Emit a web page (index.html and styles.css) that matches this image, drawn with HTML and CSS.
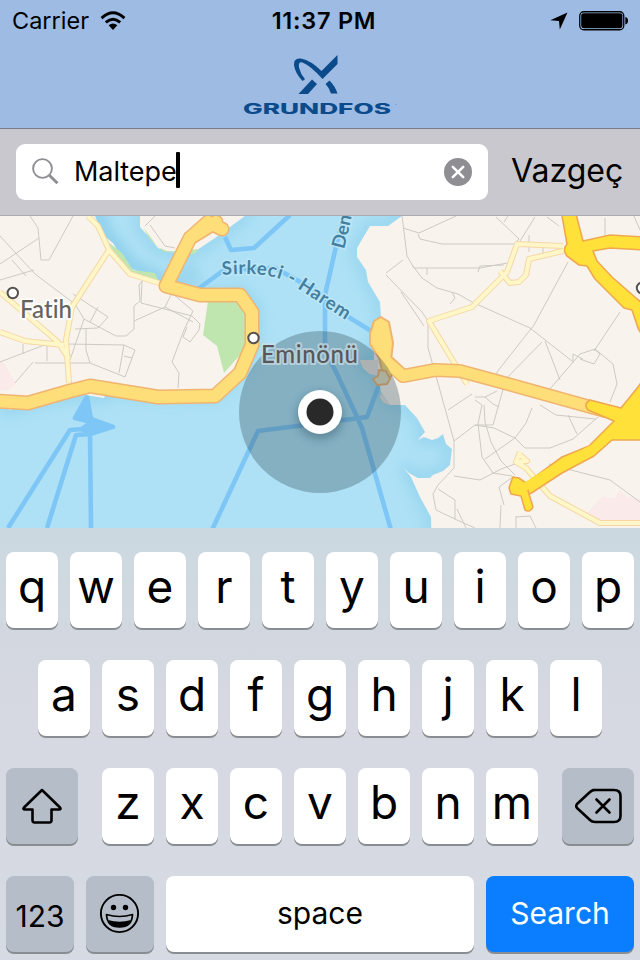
FILE: index.html
```
<!DOCTYPE html>
<html lang="tr">
<head>
<meta charset="utf-8">
<title>Grundfos</title>
<link rel="stylesheet" href="styles.css">
</head>
<body>
<div class="screen">
  <header class="header">
    <div class="status">
      <div class="status-left"><span class="carrier">Carrier</span>
        <svg class="wifi" width="26" height="20" viewBox="0 0 26 20"><g fill="none" stroke="#000" stroke-width="2.9"><path d="M1.6 7.1Q13-3.4 24.4 7.1"/><path d="M5.8 11.4Q13 4.9 20.2 11.4"/></g><path d="M8.6 14.3Q13 10.8 17.4 14.3L13 19Z"/></svg>
      </div>
      <div class="time">11:37 PM</div>
      <div class="status-right">
        <svg width="18" height="18" viewBox="0 0 18 18"><path d="M17.5.5 9.8 17.5 9 9 .3 8.2Z"/></svg>
        <svg width="50" height="20" viewBox="0 0 50 20"><rect x=".75" y=".75" width="44" height="18" rx="4" fill="none" stroke="#000" stroke-width="1.3"/><rect x="2.2" y="2.2" width="41.2" height="15" rx="2.4"/><path d="M46.3 6q2.7.7 2.7 3.7t-2.7 3.7z"/></svg>
      </div>
    </div>
    <svg class="logo" width="160" height="66" viewBox="240 52 160 66">
      <g fill="#0b4a8b"><path d="M337.5 55v9L322.500 79Q311 66 302.500 62.500Q298 61.500 299 67.500Q300.500 74 305 79.200L302.500 81Q295 73 294 65Q293.500 57.500 301 58.500Q311 60.500 321.500 71Z"/><path d="M312 79.500 317 84 308 94H298.500Z"/><path d="M325.500 84 329.500 80.500Q335 86 337.500 93.500H331Q329.500 88 325.500 84Z"/></g>
      <text class="logo-text" x="243" y="113.500" textLength="148" lengthAdjust="spacingAndGlyphs">GRUNDFOS</text>
      <circle cx="396" cy="104.500" r=".6" fill="#5f8fc4"/>
    </svg>
  </header>
  <section class="searchbar">
    <div class="field">
      <svg width="28" height="28" viewBox="0 0 28 28" fill="none" stroke="#8e8e93"><circle cx="10.500" cy="10.500" r="9.400" stroke-width="1.900"/><path d="m17.300 17.300 8.200 8" stroke-width="3"/></svg>
      <span class="query">Maltepe</span><span class="caret"></span>
      <svg class="clear" width="28" height="28" viewBox="0 0 28 28"><circle cx="14" cy="14" r="14" fill="#8e8e93"/><path d="m8.800 8.800 10.400 10.400m0-10.400L8.800 19.200" stroke="#fff" stroke-width="2.600" stroke-linecap="round"/></svg>
    </div>
    <span class="cancel">Vazgeç</span>
  </section>
  <svg class="map" width="640" height="312" viewBox="0 216 640 312">
    <defs>
      <filter id="soft" x="-10%" y="-10%" width="120%" height="120%"><feGaussianBlur stdDeviation="7"/></filter>
      <filter id="shade" x="-50%" y="-50%" width="200%" height="200%"><feGaussianBlur stdDeviation="5"/></filter>
      <path id="fatih" d="M-30 190H90L95 216 103 235 113 243 122 258 130 268 145 274 157 282 165 290 200 297 240 292 254 305 255 325 253 345 238 372 216 395 150 394 108 389 104 398 80 394 62 396 30 403 10 410 0 400H-30Z"/>
      <path id="galata" d="M140 190V227L149 237 158 248 166 251 180 252 197 250 215 238 245 216 250 190Z"/>
      <path id="asia" d="M402 190V216L388 226H370L357 248V257L366 270 368 282 380 302 381 318 374 345V360H360L363 368 370 374 378 375 381 392 390 405H405L417 418 425 432 418 440 424 437 432 440 438 438 443 434 446 444 452 449 450 465 443 471 433 475 430 478H418L409 473 403 467 411 477 420 497 431 517 432 560H670V190Z"/>
      <path id="sirkeci" d="M222 275Q274 270 296 287.500L352 324"/>
      <path id="der" d="M344 249.500 347 238 357 190"/>
    </defs>
    <rect y="216" width="640" height="312" fill="#aee1f5"/>
    <g filter="url(#soft)" fill="none" stroke="#7cc8e8" stroke-width="11" opacity=".5"><use href="#fatih"/><use href="#galata"/><use href="#asia"/></g>
    <path d="M95 206 103 235 130 268 165 286 198 270" fill="none" stroke="#80c8e6" stroke-width="22" opacity=".35" filter="url(#shade)"/>
    <g fill="none" stroke="#7dc6f6" stroke-width="4.600" stroke-linejoin="round">
      <path d="M225 237 231 250 254 248 290 215M198 289 224 270 275 268 315 290 350 318 376 334M346 210 337 242 325 295V350L338 376 357 417 362 428 391 530M212 530 258 431 367 417 379 385"/>
      <path d="M8 528 70 430 112 427 90 434 76 435 47 528M90 434 91 528M87 397 75 418 113 427 91 419Z"/>
    </g>
    <path d="M87 397 75 418 92 423 113 427 90 434 76 430 91 420Z" fill="#7dc6f6"/>
    <g fill="#f8f4ed"><use href="#fatih"/><use href="#galata"/><use href="#asia"/></g>
    <path d="M208 301 247 296 248 340 240 355 224 373 217 346 203 335ZM107 241 122 253 133 270 155 273 158 280 138 276 125 269ZM143 227 158 247 169 252 199 249 194 254 164 252 149 238Z" fill="#c0e6b0"/>
    <path d="M0 361 4 363 16 384 8 390 0 391ZM584 516 603 496 615 499 619 490 628 497 640 499V524L602 521Z" fill="#faeaea"/>
    <path d="M360 360H378V376L370 374 363 367ZM381 393 390 405 384 403 380 398Z" fill="#ebe3dd"/>
    <g fill="none" stroke="#cdcac5" stroke-width="1">
      <path d="M30 216 38 228 41 260H49L73 216M0 236 35 274 75 304 84 319 116 336H126L134 329V306L140 301 139 285 142 281M0 264 39 238M0 280 34 270M12 260 26 276M73 294 108 317 98 328 75 329M98 307 90 322M84 319 70 360M68 344 124 345 135 350 125 377 90 363 86 350V329M23 344V354M0 362 47 344V361M35 363H90M15 383 33 362M124 345 119 373M124 356 132 358M142 281 141 303 192 316 200 324 199 330 190 342 183 337 187 327M134 321 165 307 172 293M165 307 193 322M172 293 193 311 184 330 172 362 179 373 178 388M150 225 165 246 175 248M155 216 145 226"/>
      <path d="M402 216 407 256 414 268H480L507 263M403 228 419 233 456 216M418 234 420 239 442 244H515M496 217 519 239 516 242M535 217 520 241M504 222 508 216M547 217 559 226M413 266 422 278 437 288 458 294 472 302 530 328 572 361M401 292 424 326M386 273 403 260M386 275 422 312 428 321V348L436 376 454 441M568 262 534 325 497 372V378M542 342 497 388M545 341 560 380M549 390 580 354 595 349 613 364 617 384 610 402M573 363V354L583 359M594 349 600 354 594 364 580 359M594 351 620 312M605 218V240M634 216 640 230M529 235V252M543 247V254M478 272 480 266 504 265M427 268V275M448 410 472 394M454 441 475 425 494 428 515 438 525 448H550L573 439 598 417M504 386 493 425 475 425M497 391 485 397 475 397M475 400 482 405 478 424 482 457 493 473 512 476M484 405 485 422 491 442 501 461 515 475M532 408 526 423 515 438 485 459M540 405 556 415 595 419M568 415 577 434M454 441V468L438 485 433 494 436 510 457 520 475 528M454 476 480 480 501 469 515 464M549 464 571 470 610 480 640 502M438 489 455 500V519M457 509 466 528M514 476 499 487 504 505M501 505 500 528M516 516V528M516 517 530 516 536 528M452 292 455 298 450 304M485 397 493 404 499 407"/>
    </g>
    <g fill="none" stroke="#f5d7a6" stroke-width="6" stroke-linejoin="round"><path d="M88 216 98 226 109 250 130 274 159 283M109 250 72 307 66 340 69 383M0 292 58 342 69 359M0 332 25 341 64 345M563 246 517 244 507 272 472 307 429 321 467 384M563 251 529 259 526 275 519 282 510 283 500 271M520 452 516 462 526 468 550 496 600 523H640M520 455 527 461 516 462"/></g>
    <path fill="none" stroke="#fff7c8" stroke-width="4" stroke-linejoin="round" d="M88 216 98 226 109 250 130 274 159 283M109 250 72 307 66 340 69 383M0 292 58 342 69 359M0 332 25 341 64 345M563 246 517 244 507 272 472 307 429 321 467 384M563 251 529 259 526 275 519 282 510 283 500 271M520 452 516 462 526 468 550 496 600 523H640M520 455 527 461 516 462"/>
    <g fill="none" stroke-linejoin="round" stroke-linecap="round">
      <path d="M-5 401 28 403 70 391 90 386 158 397 215 396 240 373 252 345 252 312 240 295 200 295 166 286 190 238 216 222M190 238 208 222 222 229" stroke="#f0b470" stroke-width="15"/>
      <path d="M389 363 403 376 435 370 460 371 508 384 605 411" stroke="#f0b470" stroke-width="14"/>
      <path d="M-5 401 28 403 70 391 90 386 158 397 215 396 240 373 252 345 252 312 240 295 200 295 166 286 190 238 216 222M190 238 208 222 222 229" stroke="#fede78" stroke-width="12"/>
      <path d="M370 334 374 321 381 317 389 322 393 343 391 361 396 368 390 378 383 374 379 358 370 344Z" fill="#fede78" stroke="#f0b470" stroke-width="2"/>
      <path d="M387 362 403 376 435 370 460 371 508 384 605 411" stroke="#fede78" stroke-width="11"/>
      <path d="M379 370 386 371 390 379 387 384 377 385 373 379 378 376Z" fill="#e6dfc0" stroke="#f0b470" stroke-width="2"/>
    </g>
    <g stroke="#f0a850" fill="#ffe13a" stroke-width="1.600" stroke-linejoin="round">
      <path d="M561 210 567 244Q562 250 567 256L579 265 587 266 595 279 624 308 632 310 638 328 650 350V310L636 298 612 277 597 261 593 251 610 248 645 250V237L610 235 583 241 575 210Z"/>
      <path d="M650 370 638 387 621 408 590 400Q583 404 588 410L614 421 589 446 562 457 528 482 524 490 526 496 533 492 562 473 594 456 612 440H650Z"/>
      <path d="M511 482 513 477 519 478 526 483 529 494 533 507Q530 513 525 510L521 496 511 494 509 488Z"/>
    </g>
    <path d="M523 488 562 464 592 449" fill="none" stroke="#ffe13a" stroke-width="8" stroke-linecap="round"/>
    <text class="route"><textPath href="#sirkeci" textLength="136">Sirkeci - Harem</textPath></text>
    <text class="route"><textPath href="#der">Den</textPath></text>
    <g fill="#fff" stroke="#55534f" stroke-width="2"><circle cx="12.800" cy="293" r="5.200"/><circle cx="642" cy="288" r="5.200"/></g>
    <text class="place" x="20" y="318" textLength="52">Fatih</text>
    <circle cx="320" cy="412" r="81" fill="#264552" fill-opacity=".31"/>
    <circle cx="253.500" cy="338" r="5.200" fill="#fff" stroke="#55534f" stroke-width="2"/>
    <text class="place district" x="261" y="363" textLength="97">Eminönü</text>
    <circle cx="320" cy="416" r="23" fill="#123844" opacity=".35" filter="url(#shade)"/>
    <circle cx="320" cy="412" r="22" fill="#fff"/><circle cx="320" cy="412" r="13.500" fill="#292929"/>
  </svg>
  <main class="keyboard">
    <div class="row"><b class="key">q</b><b class="key">w</b><b class="key">e</b><b class="key">r</b><b class="key">t</b><b class="key">y</b><b class="key">u</b><b class="key">i</b><b class="key">o</b><b class="key">p</b></div>
    <div class="row"><b class="key">a</b><b class="key">s</b><b class="key">d</b><b class="key">f</b><b class="key">g</b><b class="key">h</b><b class="key">j</b><b class="key">k</b><b class="key">l</b></div>
    <div class="row spread">
      <div class="key dark wide"><svg width="40" height="36" viewBox="0 0 40 36" fill="none" stroke="#000" stroke-width="2.600" stroke-linejoin="round"><path d="M20 2 38 19.500Q39.500 21.500 37 21.500H29.500V32Q29.500 34.500 27.500 34.500H12.500Q10.500 34.500 10.500 32V21.500H3Q.5 21.500 2 19.500Z"/></svg></div>
      <div class="letters"><b class="key">z</b><b class="key">x</b><b class="key">c</b><b class="key">v</b><b class="key">b</b><b class="key">n</b><b class="key">m</b></div>
      <div class="key dark wide"><svg width="48" height="36" viewBox="0 0 48 36" fill="none" stroke="#000" stroke-width="2.600" stroke-linecap="round" stroke-linejoin="round"><path d="M19 2H40Q46.500 2 46.500 8V28Q46.500 34 40 34H21Q18 34 16 32L3 20Q1.500 18 3 16L16 4Q18 2 21 2Z"/><path d="m22.500 11.500 13 13m0-13-13 13"/></svg></div>
    </div>
    <div class="row bottom">
      <div class="key dark small numbers">123</div>
      <div class="key dark small"><svg width="40" height="40" viewBox="0 0 40 40"><circle cx="19.500" cy="19.500" r="18.600" fill="none" stroke="#000" stroke-width="1.900"/><circle cx="13.500" cy="13.500" r="2.700"/><circle cx="25.500" cy="13.500" r="2.700"/><path d="M6.500 20.500Q19.500 24.500 32.500 20.500Q32 33 19.500 33T6.500 20.500Z" fill="none" stroke="#000" stroke-width="1.700" stroke-linejoin="round"/><path d="M8 26Q19.500 29.500 31 26Q28 33 19.500 33T8 26Z"/></svg></div>
      <div class="key space">space</div>
      <div class="key search">Search</div>
    </div>
  </main>
</div>
</body>
</html>
```
FILE: styles.css
```
* { box-sizing: border-box; }
body { margin: 0; font-family: Inter, "Liberation Sans", sans-serif; color: #000; }
svg { display: block; flex: none; }
.screen { width: 640px; height: 960px; overflow: hidden; display: flex; flex-direction: column; }
.header { height: 129px; background: #9dbbe3; border-bottom: 1px solid #777b87; }
.status { height: 40px; padding: 1px 11px 0 12px; display: grid; grid-template-columns: 1fr auto 1fr; align-items: center; font-size: 23.5px; line-height: 40px; }
.status-left, .status-right { display: flex; align-items: center; }
.status-left { gap: 11px; }
.status-right { justify-content: flex-end; gap: 11px; }
.time { font-weight: 600; letter-spacing: .75px; padding-left: 7px; }
.logo { margin: 12px auto 0; }
.logo-text { font: 800 14px Inter, sans-serif; fill: #0b4a8b; }
.searchbar { height: 87px; padding: 15px 16px 15px; display: flex; align-items: center; background: #c9c8ce; border-bottom: 1px solid #aaa9b1; }
.field { width: 472px; height: 56px; padding: 0 16px; display: flex; align-items: center; background: #fff; border-radius: 9px; }
.query { margin: -2px 0 0 14px; font-size: 27px; letter-spacing: -.05px; }
.caret { width: 4px; height: 36px; margin: -4px 0 0 -1px; background: #000; border-radius: 1px; }
.clear { margin-left: auto; }
.cancel { margin: -3px 0 0 23px; font-size: 32px; white-space: nowrap; }
.place { font: 500 24px Lato, sans-serif; font-variant-ligatures: none; fill: #66635f; stroke: rgba(255,255,255,.8); stroke-width: 4px; paint-order: stroke; stroke-linejoin: round; }
.district { fill: #57575a; stroke: rgba(210,225,230,.65); }
.route { font: 700 18.5px Lato, sans-serif; fill: #457f9f; stroke: rgba(190,232,248,.9); stroke-width: 3px; paint-order: stroke; }
.keyboard { height: 432px; padding: 24px 6px 6px; display: flex; flex-direction: column; gap: 32px; background: linear-gradient(#cbd8e0 0, #d1d9e0 75px, #d3d7df 115px, #d6d9e1 200px, #d6dae2 100%); }
.row, .letters { display: flex; justify-content: center; gap: 12px; }
.spread { justify-content: space-between; }
.key { width: 52px; height: 76px; display: flex; align-items: center; justify-content: center; background: #fff; border-radius: 8px; box-shadow: 0 2px 0 #898c91; font-size: 46px; font-weight: 400; line-height: 68px; padding-bottom: 8px; }
.dark { background: #b5bdc9; padding-bottom: 0; }
.wide { width: 72px; }
.small { width: 68px; }
.space, .search, .numbers { font-size: 30px; padding-bottom: 2px; }
.numbers { padding: 3px 0 0; }
.space { width: 308px; }
.search { width: 148px; background: #0a7eff; color: #fff; }
```
